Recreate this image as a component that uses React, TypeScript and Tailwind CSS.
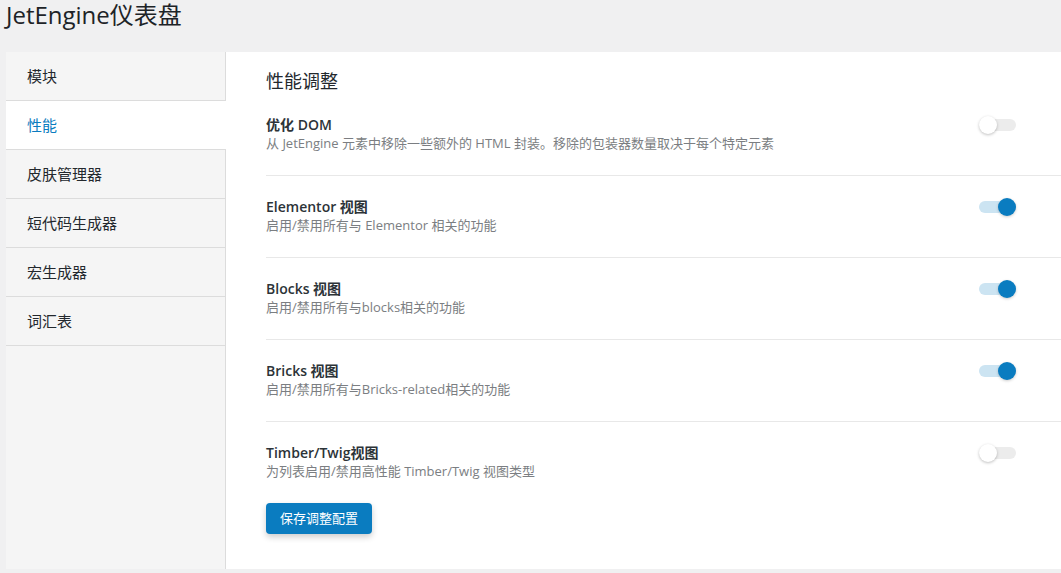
const FONT = "font-['Open_Sans','Noto_Sans_CJK_SC',sans-serif]";

const NAV = ["模块", "性能", "皮肤管理器", "短代码生成器", "宏生成器", "词汇表"];

const SETTINGS: { title: string; desc: string; on: boolean }[] = [
  {
    title: "优化 DOM",
    desc: "从 JetEngine 元素中移除一些额外的 HTML 封装。移除的包装器数量取决于每个特定元素",
    on: false,
  },
  { title: "Elementor 视图", desc: "启用/禁用所有与 Elementor 相关的功能", on: true },
  { title: "Blocks 视图", desc: "启用/禁用所有与blocks相关的功能", on: true },
  { title: "Bricks 视图", desc: "启用/禁用所有与Bricks-related相关的功能", on: true },
  { title: "Timber/Twig视图", desc: "为列表启用/禁用高性能 Timber/Twig 视图类型", on: false },
];

function Toggle({ on }: { on: boolean }) {
  return (
    <div className="relative h-[18px] w-[37px] shrink-0">
      <div
        className={
          on
            ? "absolute left-0 right-0 top-[3px] h-[12px] rounded-full bg-[#cce4f2]"
            : "absolute left-0 right-0 top-[3px] h-[12px] rounded-full bg-[#ececec]"
        }
      />
      <div
        className={
          on
            ? "absolute right-0 top-0 h-[18px] w-[18px] rounded-full bg-[#0a7cc0] shadow-[0_1px_3px_rgba(0,0,0,0.2)]"
            : "absolute left-0 top-0 h-[18px] w-[18px] rounded-full bg-white shadow-[0_1px_3px_rgba(0,0,0,0.25)]"
        }
      />
    </div>
  );
}

export default function App() {
  return (
    <div className={`min-h-screen bg-[#f0f0f1] text-[#23282d] ${FONT}`}>
      <h1 className="pl-[6px] text-[24px] font-normal leading-[30px] text-[#1d2327]">
        JetEngine仪表盘
      </h1>

      <div className="ml-[6px] mt-[22px] flex h-[517px] bg-white">
        {/* sidebar */}
        <div className="flex w-[220px] shrink-0 flex-col bg-[#f5f5f5]">
          {NAV.map((item, i) => (
            <div
              key={item}
              className={
                i === 1
                  ? "flex h-[49px] items-center border-b border-[#dcdcdc] bg-white pl-[21px] text-[15px] text-[#0a7cc0]"
                  : "flex h-[49px] items-center border-b border-r border-[#dcdcdc] pl-[21px] text-[15px] text-[#23282d]"
              }
            >
              {item}
            </div>
          ))}
          <div className="flex-1 border-r border-[#dcdcdc]" />
        </div>

        {/* content */}
        <div className="flex min-w-0 flex-1 flex-col pl-[40px] pt-[16px]">
          <h2 className="text-[18px] font-normal leading-[26px] text-[#23282d]">性能调整</h2>

          <div className="flex flex-col">
            {SETTINGS.map((s, i) => (
              <div
                key={s.title}
                className={
                  i < SETTINGS.length - 1
                    ? "flex items-start justify-between border-b border-[#e8e8e8] pb-[22px] pt-[21px]"
                    : "flex items-start justify-between pb-[22px] pt-[21px]"
                }
              >
                <div>
                  <div className="text-[14px] font-semibold leading-[19px] text-[#2c3338]">{s.title}</div>
                  <div className="text-[13px] leading-[19px] text-[#7b7e82]">{s.desc}</div>
                </div>
                <div className="mr-[45px] pt-[1px]">
                  <Toggle on={s.on} />
                </div>
              </div>
            ))}
          </div>

          <div>
            <button className="h-[31px] rounded-[4px] bg-[#0a7cc0] px-[14px] text-[13px] text-white shadow-[0_3px_6px_rgba(0,0,0,0.2)]">
              保存调整配置
            </button>
          </div>
        </div>
      </div>
    </div>
  );
}
